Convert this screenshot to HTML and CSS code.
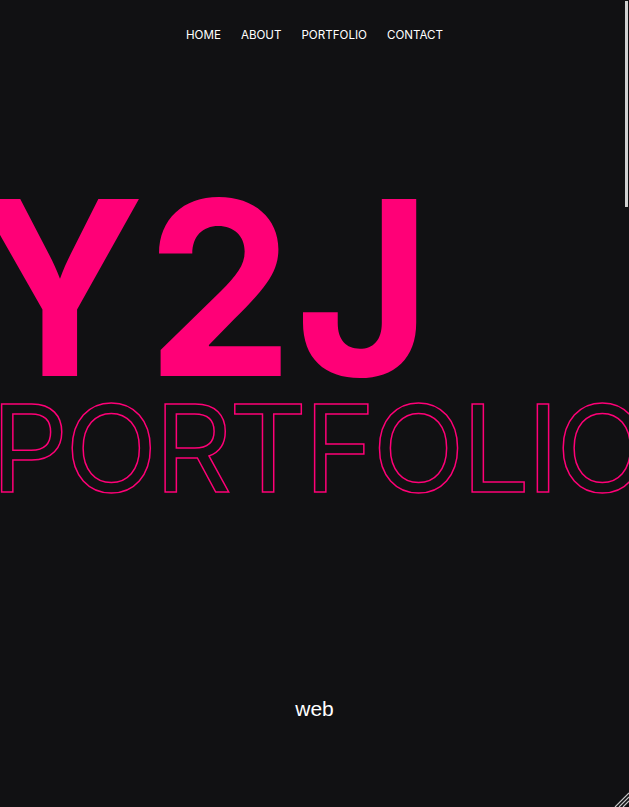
FILE: index.html
```html
<!DOCTYPE html>
<html lang="en">
<head>
<meta charset="utf-8">
<title>Y2J Portfolio</title>
<link rel="stylesheet" href="styles.css">
</head>
<body>
<div class="page">
  <header class="nav">
    <a href="#" class="nav-link">HOME</a>
    <a href="#" class="nav-link">ABOUT</a>
    <a href="#" class="nav-link">PORTFOLIO</a>
    <a href="#" class="nav-link">CONTACT</a>
  </header>
  <section class="hero">
    <h1 class="hero-title"><span class="hero-title-text">Y2J</span></h1>
    <div class="hero-outline">PORTFOLIO</div>
    <p class="hero-sub">web</p>
  </section>
  <section class="rest"></section>
</div>
<div class="scroll-thumb"></div>
<svg class="resize-grip" width="15" height="15" viewBox="0 0 15 15">
  <path d="M15 1 L1 15 M15 5 L5 15 M15 9 L9 15" stroke="#c8c8c8" stroke-width="1.2" fill="none"/>
</svg>
</body>
</html>
```
FILE: styles.css
```css
html, body {
  margin: 0;
  padding: 0;
  background: #111113;
  overflow: hidden;
}
.page {
  width: 100vw;
  height: 100vh;
  box-sizing: border-box;
  overflow-y: scroll;
  overflow-x: hidden;
  background: #111113;
  font-family: Inter, "Noto Sans", sans-serif;
}
.page::-webkit-scrollbar {
  width: 0;
}
.nav {
  display: flex;
  justify-content: center;
  gap: 20px;
  padding-top: 28px;
}
.nav-link {
  color: #ffffff;
  text-decoration: none;
  font-size: 11.6px;
  line-height: 15px;
}
.hero {
  display: flex;
  flex-direction: column;
  white-space: nowrap;
}
.hero-title {
  margin: 124px 0 0 -26px;
  font-family: Inter, sans-serif;
  font-weight: 700;
  font-size: 243px;
  line-height: 1;
  letter-spacing: 2px;
  color: #ff0077;
}
.hero-title-text {
  display: inline-block;
  transform: scaleX(0.96);
  transform-origin: left center;
}
.hero-outline {
  margin: -22px 0 0 -9px;
  font-family: Inter, sans-serif;
  font-weight: 400;
  font-size: 121px;
  line-height: 1;
  letter-spacing: -3.2px;
  color: transparent;
  -webkit-text-stroke: 1.5px #ff0077;
}
.hero-sub {
  margin: 188px 0 0;
  text-align: center;
  font-family: "Liberation Sans", Arial, sans-serif;
  font-size: 21px;
  line-height: 24px;
  color: #ffffff;
}
.rest {
  height: 2400px;
}
.scroll-thumb {
  position: fixed;
  top: 1px;
  left: 625px;
  width: 3px;
  height: 206px;
  background: #d2d2d2;
}
.resize-grip {
  position: fixed;
  right: 0;
  bottom: 0;
}
```
